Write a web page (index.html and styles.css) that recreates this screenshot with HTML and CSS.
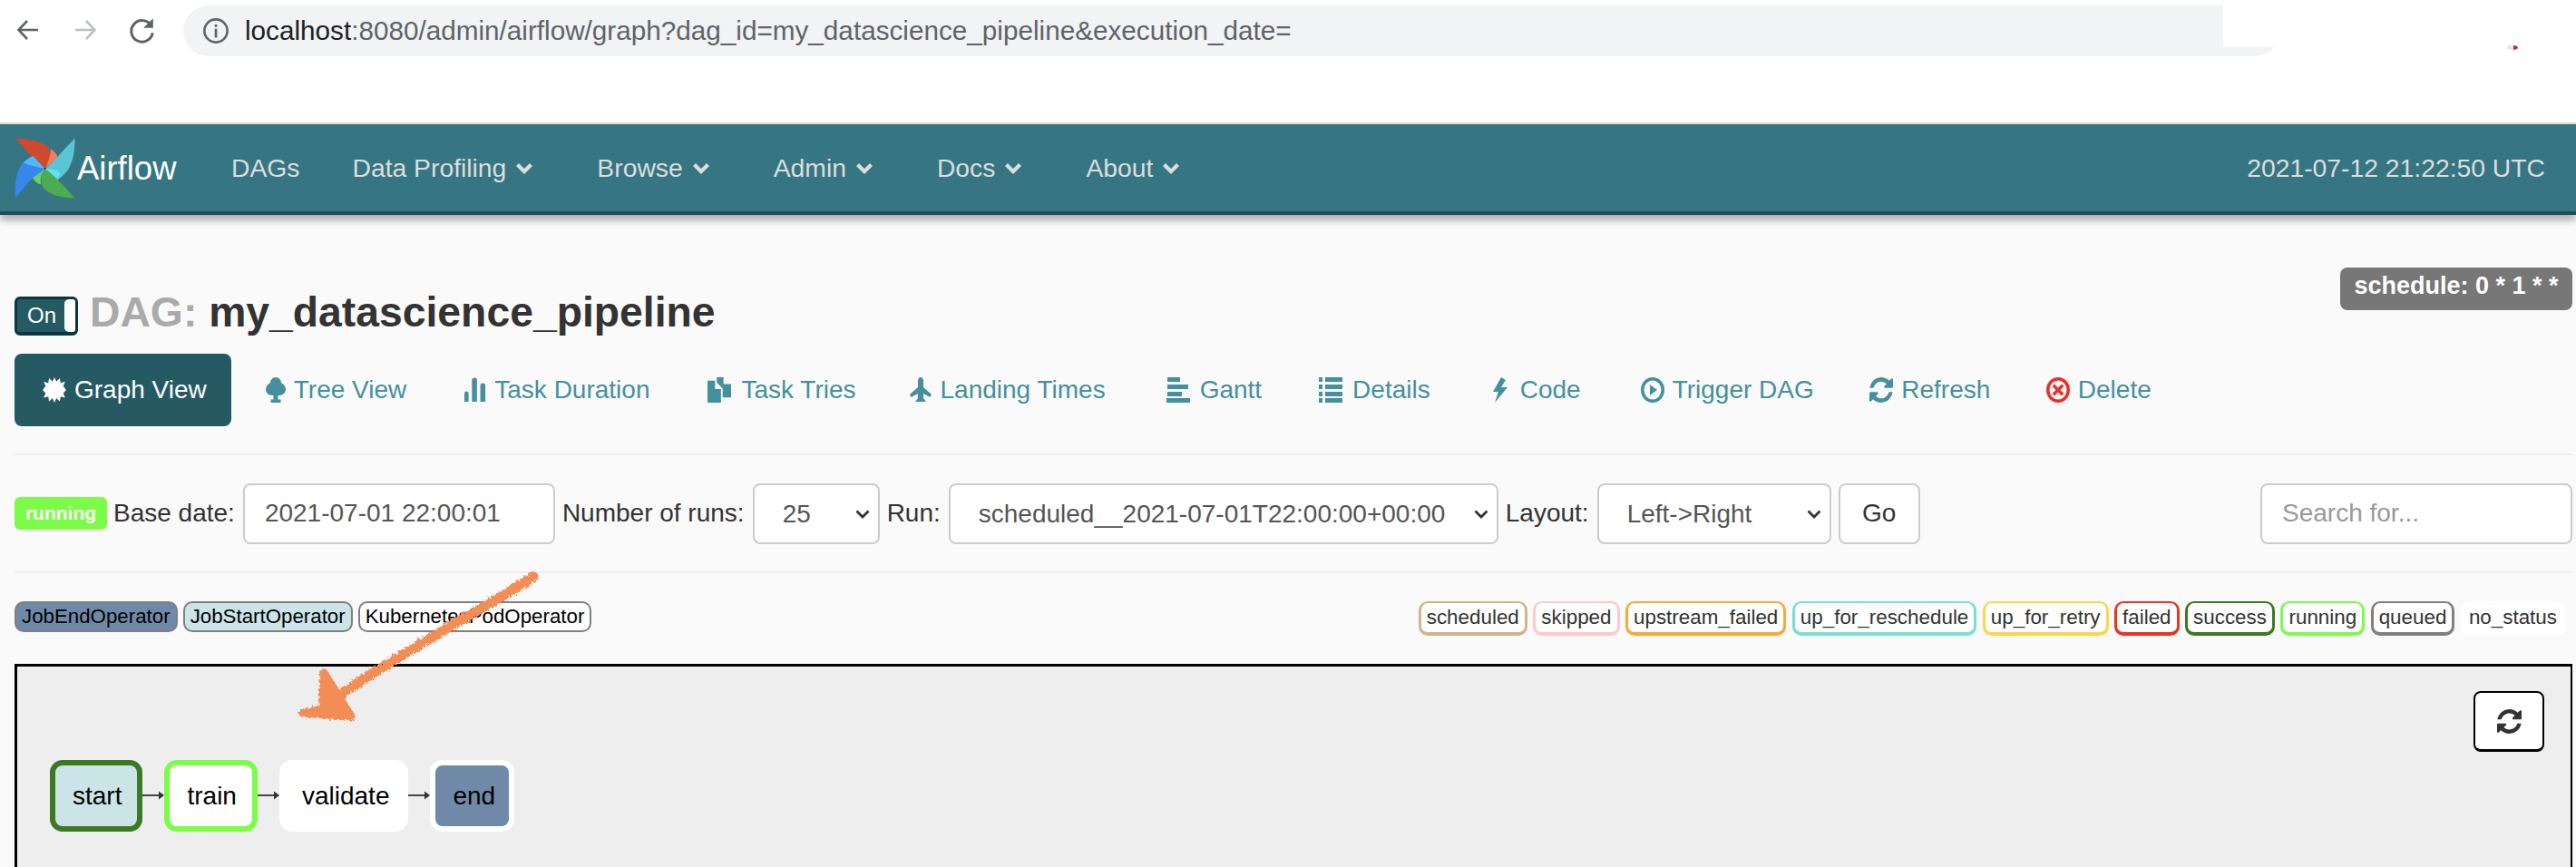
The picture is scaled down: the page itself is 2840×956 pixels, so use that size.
FILE: index.html
```html
<!DOCTYPE html>
<html lang="en">
<head>
<meta charset="utf-8">
<title>Airflow - my_datascience_pipeline</title>
<link rel="stylesheet" href="styles.css">
</head>
<body>
<header class="chrome">
  <svg class="chrome-icon back" viewBox="0 0 28 28"><path d="M25 14H4M13 4 3.500 14 13 24" fill="none" stroke="#5f6368" stroke-width="2.600"/></svg>
  <svg class="chrome-icon fwd" viewBox="0 0 28 28"><path d="M3 14h21M15 4l9.500 10L15 24" fill="none" stroke="#bdc1c6" stroke-width="2.600"/></svg>
  <svg class="chrome-icon reload" viewBox="0 0 28 28"><path d="M23 9.500A11 11 0 1 0 24.500 17" fill="none" stroke="#5f6368" stroke-width="2.800"/><path d="M25 2v10H15z" fill="#5f6368"/></svg>
  <div class="omnibox">
    <svg class="info" viewBox="0 0 28 28"><circle cx="14" cy="14" r="11.800" fill="none" stroke="#5f6368" stroke-width="2.400"/><path d="M12.800 12h2.500v9h-2.500zM12.800 7.500h2.500v2.500h-2.500z" fill="#5f6368"/></svg>
    <span class="url"><b>localhost</b>:8080/admin/airflow/graph?dag_id=my_datascience_pipeline&amp;execution_date=</span>
    <div class="omni-mask"></div>
  </div>
  <i class="speck"></i>
</header>

<nav class="navbar">
  <a class="brand">
    <svg class="logo" viewBox="40 60 225 220">
      <path d="M52 68C95 70 140 75 165 100 175 125 168 150 153 170 120 150 85 105 52 68Z" fill="#d1492c"/>
      <path d="M172 103C188 115 195 125 196 132L153 170C165 150 172 125 172 103Z" fill="#f07f5e"/>
      <path d="M255 68C255 110 250 145 230 178 215 195 205 205 190 213L153 172 195 132C215 110 235 88 255 68Z" fill="#5cc5d5"/>
      <path d="M153 171C170 172 190 176 206 186 202 196 196 206 190 213Z" fill="#5de3f2"/>
      <path d="M255 272C215 270 180 265 155 245 135 225 135 195 153 172 180 190 222 235 255 272Z" fill="#4dab52"/>
      <path d="M153 172C138 190 135 210 140 226 125 222 113 210 108 197 120 185 135 176 153 172Z" fill="#63d36c"/>
      <path d="M52 272C50 230 50 190 72 158 85 143 98 133 112 128L153 172 108 205C90 225 70 250 52 272Z" fill="#3587ea"/>
      <path d="M112 128 153 172C130 166 100 160 78 152 88 142 100 133 112 128Z" fill="#55b6f6"/>
      <circle cx="153" cy="171" r="3" fill="#12202a"/>
    </svg>
    <span>Airflow</span>
  </a>
  <a class="nav-link">DAGs</a>
  <a class="nav-link has-menu">Data Profiling<svg class="chev" viewBox="0 0 20 16"><path d="M1 5l3-3 6 6 6-6 3 3-9 9z"/></svg></a>
  <a class="nav-link has-menu">Browse<svg class="chev" viewBox="0 0 20 16"><path d="M1 5l3-3 6 6 6-6 3 3-9 9z"/></svg></a>
  <a class="nav-link has-menu">Admin<svg class="chev" viewBox="0 0 20 16"><path d="M1 5l3-3 6 6 6-6 3 3-9 9z"/></svg></a>
  <a class="nav-link has-menu">Docs<svg class="chev" viewBox="0 0 20 16"><path d="M1 5l3-3 6 6 6-6 3 3-9 9z"/></svg></a>
  <a class="nav-link has-menu">About<svg class="chev" viewBox="0 0 20 16"><path d="M1 5l3-3 6 6 6-6 3 3-9 9z"/></svg></a>
  <span class="clock">2021-07-12 21:22:50 UTC</span>
</nav>

<main class="page">
  <section class="title-row">
    <div class="title-left">
      <div class="toggle"><span>On</span><i></i></div>
      <h1><span class="dag-label">DAG:</span> my_datascience_pipeline</h1>
    </div>
    <span class="schedule">schedule: 0 * 1 * *</span>
  </section>

  <ul class="tabs">
    <li class="tab active">
      <svg class="ti" viewBox="0 0 24 26"><path d="M12 0l2 4.500L17.500 1l.8 5 4.700-1.500L21 9l3 4-3 3.500 2 4.500-4.700-1.200-.8 5-3.500-3.500-2 4.700-2-4.700-3.500 3.500-.8-5L1 21l2-4.500L0 13l3-4-2-4.500L5.700 6l.8-5L10 4.500z"/></svg>Graph View</li>
    <li class="tab"><svg class="ti ti-narrow" viewBox="0 0 24 28"><path d="M12 0c3.500 0 6 3 6 6 3 1.500 5 4.500 5 7.500 0 3.500-3 6.500-7 6.500h-1.500v4.500h3V28H6.500v-3.500h3V20H8c-4 0-7-3-7-6.500C1 10.500 3 7.500 6 6c0-3 2.500-6 6-6z"/></svg>Tree View</li>
    <li class="tab"><svg class="ti ti-bars" viewBox="0 0 26 28"><path d="M0 18a2.500 2.500 0 0 1 5 0v10H0zM9 2.500a3 3 0 0 1 6 0V28H9zM19 9a3 3 0 0 1 6 0v19h-6z"/></svg>Task Duration</li>
    <li class="tab"><svg class="ti ti-wide" viewBox="0 0 28 30"><path d="M0 4h9v10h7v16H0zM11 0h8v8h9v16h-10V13l-7-7z"/></svg>Task Tries</li>
    <li class="tab"><svg class="ti" viewBox="0 0 24 28"><path d="M12 0c2 0 3 2 3 4v7l9 8-1.500 3L15 18v5l3 4H6l3-4v-5l-7.500 4L0 19l9-8V4c0-2 1-4 3-4z"/></svg>Landing Times</li>
    <li class="tab"><svg class="ti ti-wide" viewBox="0 0 26 28"><path d="M1 0h14v5H1zM1 8h23v5H1zM1 16h16v5H1zM0 23h26v5H0z"/></svg>Gantt</li>
    <li class="tab"><svg class="ti ti-wide" viewBox="0 0 26 28"><path d="M0 0h4v5H0zM7 0h19v5H7zM0 8h4v5H0zM7 8h19v5H7zM0 16h4v5H0zM7 16h19v5H7zM0 23h4v5H0zM7 23h19v5H7z"/></svg>Details</li>
    <li class="tab"><svg class="ti ti-bolt" viewBox="0 0 18 28"><path d="M10 0 1 16h6L3 28l14-17h-7l5-8z"/></svg>Code</li>
    <li class="tab"><svg class="ti" viewBox="0 0 26 28"><path fill-rule="evenodd" d="M13 0a13 14 0 1 1 0 28 13 14 0 0 1 0-28zm0 3.500a9.500 10.500 0 1 0 0 21 9.500 10.500 0 0 0 0-21z"/><path d="M10 8l8 6-8 6z"/></svg>Trigger DAG</li>
    <li class="tab"><svg class="ti" viewBox="0 0 1536 1536" preserveAspectRatio="none"><path d="M1511 928q0 5-1 7-64 268-268 434.500t-478 166.500q-146 0-282.500-55t-243.500-157l-129 129q-19 19-45 19t-45-19-19-45v-448q0-26 19-45t45-19h448q26 0 45 19t19 45-19 45l-137 137q71 66 161 102t187 36q134 0 250-65t186-179q11-17 53-117 8-23 30-23h192q13 0 22.500 9.500t9.500 22.500zm25-800v448q0 26-19 45t-45 19h-448q-26 0-45-19t-19-45 19-45l138-138q-148-137-349-137-134 0-250 65t-186 179q-11 17-53 117-8 23-30 23h-199q-13 0-22.500-9.500t-9.500-22.500v-7q65-268 270-434.500t480-166.500q146 0 284 55.500t245 156.500l130-129q19-19 45-19t45 19 19 45z"/></svg>Refresh</li>
    <li class="tab"><svg class="ti" viewBox="0 0 26 28"><path fill="#e8302a" fill-rule="evenodd" d="M13 0a13 14 0 1 1 0 28 13 14 0 0 1 0-28zm0 3.500a9.500 10.500 0 1 0 0 21 9.500 10.500 0 0 0 0-21z"/><path fill="#e8302a" d="M9 7.500l4 4 4-4 2.500 2.500-4 4 4 4-2.500 2.500-4-4-4 4L6.500 18l4-4-4-4z"/></svg>Delete</li>
  </ul>

  <form class="controls">
    <span class="state-badge">running</span>
    <label>Base date:</label>
    <input class="ctl base-date" type="text" value="2021-07-01 22:00:01">
    <label>Number of runs:</label>
    <span class="select-wrap runs">
      <select class="ctl"><option>25</option></select>
      <svg class="select-caret" viewBox="0 0 16 10"><path d="M1.500 1.500 8 8l6.500-6.500" fill="none" stroke="#333" stroke-width="2.800"/></svg>
    </span>
    <label>Run:</label>
    <span class="select-wrap run">
      <select class="ctl"><option>scheduled__2021-07-01T22:00:00+00:00</option></select>
      <svg class="select-caret" viewBox="0 0 16 10"><path d="M1.500 1.500 8 8l6.500-6.500" fill="none" stroke="#333" stroke-width="2.800"/></svg>
    </span>
    <label>Layout:</label>
    <span class="select-wrap layout">
      <select class="ctl"><option>Left-&gt;Right</option></select>
      <svg class="select-caret" viewBox="0 0 16 10"><path d="M1.500 1.500 8 8l6.500-6.500" fill="none" stroke="#333" stroke-width="2.800"/></svg>
    </span>
    <button class="ctl go" type="button">Go</button>
    <input class="ctl search" type="text" placeholder="Search for...">
  </form>

  <section class="legends">
    <div class="legend-group">
      <span class="op op-end">JobEndOperator</span>
      <span class="op op-start">JobStartOperator</span>
      <span class="op op-pod">KubernetesPodOperator</span>
    </div>
    <div class="legend-group states">
      <span class="st st-scheduled">scheduled</span>
      <span class="st st-skipped">skipped</span>
      <span class="st st-upstream">upstream_failed</span>
      <span class="st st-resched">up_for_reschedule</span>
      <span class="st st-retry">up_for_retry</span>
      <span class="st st-failed">failed</span>
      <span class="st st-success">success</span>
      <span class="st st-running">running</span>
      <span class="st st-queued">queued</span>
      <span class="st st-none">no_status</span>
    </div>
  </section>

  <section class="canvas">
    <button class="reset" type="button"><svg viewBox="0 0 1536 1536"><path d="M1511 928q0 5-1 7-64 268-268 434.500t-478 166.500q-146 0-282.500-55t-243.500-157l-129 129q-19 19-45 19t-45-19-19-45v-448q0-26 19-45t45-19h448q26 0 45 19t19 45-19 45l-137 137q71 66 161 102t187 36q134 0 250-65t186-179q11-17 53-117 8-23 30-23h192q13 0 22.500 9.500t9.500 22.500zm25-800v448q0 26-19 45t-45 19h-448q-26 0-45-19t-19-45 19-45l138-138q-148-137-349-137-134 0-250 65t-186 179q-11 17-53 117-8 23-30 23h-199q-13 0-22.500-9.500t-9.500-22.500v-7q65-268 270-434.500t480-166.500q146 0 284 55.500t245 156.500l130-129q19-19 45-19t45 19 19 45z"/></svg></button>
    <div class="dag">
      <div class="node n-start">start</div>
      <svg class="edge" viewBox="0 0 24 12"><path d="M0 6h20" stroke="#444" stroke-width="2"/><path d="M18 1.500l6 4.500-6 4.500z" fill="#333"/></svg>
      <div class="node n-train">train</div>
      <svg class="edge" viewBox="0 0 24 12"><path d="M0 6h20" stroke="#444" stroke-width="2"/><path d="M18 1.500l6 4.500-6 4.500z" fill="#333"/></svg>
      <div class="node n-validate">validate</div>
      <svg class="edge" viewBox="0 0 24 12"><path d="M0 6h20" stroke="#444" stroke-width="2"/><path d="M18 1.500l6 4.500-6 4.500z" fill="#333"/></svg>
      <div class="node n-end">end</div>
    </div>
  </section>
</main>

<svg class="scribble" viewBox="320 620 280 185">
  <defs>
    <filter id="rough" x="-10%" y="-10%" width="120%" height="120%">
      <feTurbulence type="fractalNoise" baseFrequency="0.35" numOctaves="2" seed="4"/>
      <feDisplacementMap in="SourceGraphic" scale="6"/>
    </filter>
  </defs>
  <g filter="url(#rough)" fill="#f28d54" stroke="#f28d54">
    <path d="M588 636 C540 668 470 702 372 768" fill="none" stroke-width="11" stroke-linecap="round"/>
    <path d="M356 782 L357 742 L387 790 L334 786Z" stroke-width="9" stroke-linejoin="round"/>
  </g>
</svg>
</body>
</html>
```
FILE: styles.css
```css
* { box-sizing: border-box; }
html, body { margin: 0; height: 956px; overflow: hidden; }
body {
  position: relative;
  background: #fafafa;
  color: #333;
  font-family: "Liberation Sans", Arial, sans-serif;
  font-size: 28px;
}

/* browser toolbar */
.chrome {
  position: relative;
  height: 135px;
  background: #fff;
  display: flex;
  align-items: flex-start;
  padding: 6px 0 0 17px;
}
.chrome-icon { width: 28px; height: 28px; margin-top: 13px; flex: none; }
.fwd { margin-left: 35px; }
.reload { width: 30px; height: 30px; margin-left: 34px; margin-top: 12px; }
.omnibox {
  position: relative;
  margin-left: 30px;
  width: 2312px;
  height: 56px;
  border-radius: 28px;
  background: #f1f3f4;
  display: flex;
  align-items: center;
  padding-left: 21px;
}
.info { width: 30px; height: 30px; flex: none; }
.url { margin-left: 17px; color: #5f6368; font-size: 29.700px; white-space: nowrap; }
.url b { font-weight: 400; color: #202124; }
.omni-mask {
  position: absolute;
  left: 2249px;
  top: 0;
  right: -4px;
  height: 46px;
  background: #fff;
}
.speck {
  position: absolute;
  left: 2764px;
  top: 50px;
  width: 12px;
  height: 5px;
  border-radius: 50%;
  background: linear-gradient(90deg, #e4e6ea 60%, #b03040 60%);
}

/* navbar */
.navbar {
  height: 102px;
  background: #357682;
  border-top: 2px solid #dcdcdc;
  border-bottom: 4px solid #1e4d57;
  box-shadow: 0 6px 8px rgba(0, 0, 0, .3);
  display: flex;
  align-items: center;
  padding: 1px 34px 0 17px;
  color: #ddd;
  font-size: 28.300px;
  position: relative;
}
.brand { display: flex; align-items: center; color: #fff; font-size: 36.500px; width: 238px; }
.logo { width: 73px; height: 71px; margin-left: -4px; margin-right: -1px; flex: none; }
.nav-link { margin-right: 58px; white-space: nowrap; display: flex; align-items: center; }
.has-menu { margin-right: 70px; }
.chev { width: 20px; height: 16px; margin-left: 10px; fill: #ddd; }
.clock { margin-left: auto; white-space: nowrap; }

/* title */
.page { padding: 0 4px 0 16px; }
.title-row {
  height: 153px;
  padding-top: 58px;
  display: flex;
  justify-content: space-between;
  align-items: flex-start;
}
.title-left { display: flex; align-items: center; margin-top: 24px; }
.toggle {
  width: 70px;
  height: 43px;
  background: #265a63;
  border: 3px solid #0c3640;
  border-bottom-width: 4px;
  border-radius: 6px;
  display: flex;
  color: #fff;
  font-size: 24px;
  align-items: center;
  justify-content: space-between;
  padding-left: 11px;
}
.toggle i { width: 12px; height: 100%; background: #fff; border-radius: 5px 3px 3px 5px; }
h1 { margin: 0 0 8px 13px; font-size: 46.300px; font-weight: 700; line-height: 50px; color: #333; white-space: nowrap; }
.dag-label { color: #aaa; }
.schedule {
  width: 256px;
  height: 47px;
  background: #777;
  color: #fff;
  border-radius: 8px;
  font-size: 27px;
  font-weight: 700;
  display: flex;
  align-items: center;
  justify-content: center;
  white-space: nowrap;
  padding-bottom: 6px;
}

/* tabs */
.tabs {
  list-style: none;
  margin: 0;
  padding: 0 0 30px;
  height: 112px;
  display: flex;
  gap: 4px;
  border-bottom: 2px solid #eee;
}
.tab {
  height: 80px;
  display: flex;
  align-items: center;
  padding: 0 30px;
  color: #44909f;
  border-radius: 8px;
  white-space: nowrap;
}
.tab.active { background: #265a63; color: #fff; padding: 0 27px 0 31px; margin-right: 3px; }
.tab:nth-child(4) { margin-right: -6px; }
.tab:nth-child(5) { margin-right: 3px; }
.tab:nth-child(6) { margin-right: -1px; }
.tab:nth-child(7) { margin-right: 4px; }
.tab:nth-child(8) { margin-right: 2px; }
.tab:nth-child(9) { margin-right: -2.500px; }
.tab:nth-child(10) { margin-right: -2.500px; }
.ti { width: 26px; height: 28px; margin-right: 9px; fill: currentColor; flex: none; }
.ti-narrow { width: 24px; margin-right: 8px; }
.ti-bars { width: 24px; }
.ti-wide { margin-right: 11px; }
.ti-bolt { width: 18px; margin-right: 13px; }

/* controls */
.controls {
  height: 130px;
  display: flex;
  align-items: center;
  gap: 8px;
  border-bottom: 2px solid #eee;
}
.state-badge {
  width: 102px;
  height: 36px;
  margin-right: -1px;
  background: #7bfc47;
  color: #fff;
  font-size: 21px;
  font-weight: 700;
  border-radius: 6px;
  display: flex;
  align-items: center;
  justify-content: center;
}
.controls label { margin-right: 1px; }
.ctl {
  height: 67px;
  background: #fff;
  border: 2px solid #ccc;
  border-radius: 8px;
  color: #555;
  font: 28px "Liberation Sans", Arial, sans-serif;
  padding: 0 22px;
}
.base-date { width: 344px; }
.select-wrap { position: relative; display: block; }
.select-wrap select {
  width: 100%;
  appearance: none;
  -webkit-appearance: none;
  padding: 0 30px 0 31px;
}
.select-caret {
  position: absolute;
  right: 11px;
  top: 29px;
  width: 16px;
  height: 10px;
  pointer-events: none;
}
.runs { width: 140px; }
.run { width: 606px; }
.layout { width: 258px; }
.go { width: 90px; color: #333; padding: 0; }
.search { width: 344px; margin-left: auto; }
.search::placeholder { color: #999; }

/* legends */
.legends {
  height: 100px;
  display: flex;
  justify-content: space-between;
  align-items: flex-start;
  padding-top: 31px;
  padding-right: 8px;
}
.legend-group { display: flex; gap: 6px; }
.states { gap: 6.500px; }
.op, .st { white-space: nowrap; display: flex; align-items: center; border-radius: 10px; }
.op { font-size: 22.300px; height: 34px; padding: 0 6px; border: 2px solid #808080; color: #000; }
.op-end { background: #7189a8; }
.op-start { background: #cbe4e8; }
.op-pod { background: #fff; }
.st { font-size: 22.400px; height: 38px; padding: 0 6px; background: #fff; border-style: solid; border-width: 2px 3px 4px; color: #333; }
.st-scheduled { border-color: #d2b48c; }
.st-skipped { border-color: #ffc8d0; }
.st-upstream { border-color: #f7a93c; }
.st-resched { border-color: #76e0d0; }
.st-retry { border-color: #fcd64a; }
.st-failed { border-color: #ee3224; }
.st-success { border-color: #3b7a22; }
.st-running { border-color: #7bfc47; }
.st-queued { border-color: #808080; }
.st-none { border-color: #fff; }

/* graph */
.canvas {
  position: relative;
  height: 300px;
  background: #eee;
  border: 3px solid #000;
  border-right-width: 2px;
  padding: 103px 0 0 36px;
}
.reset {
  position: absolute;
  top: 27px;
  right: 29px;
  width: 78px;
  height: 67px;
  background: #fff;
  border: 2px solid #000;
  border-bottom-width: 3px;
  border-radius: 8px;
  padding: 0;
  display: flex;
  align-items: center;
  justify-content: center;
}
.reset svg { width: 27px; height: 27px; fill: #333; }
.dag { display: flex; align-items: center; }
.node {
  height: 79px;
  border: 6px solid #fff;
  border-radius: 14px;
  padding: 0 17px 0 19px;
  background: #fff;
  color: #000;
  display: flex;
  align-items: center;
}
.n-start { background: #cbe4e8; border-color: #3b7a22; }
.n-train { border-color: #7bfc47; }
.n-validate, .n-end { padding-right: 15px; }
.n-end { background: #7189a8; }
.edge { width: 24px; height: 12px; flex: none; margin-top: -2px; }

/* hand-drawn annotation on top of the page */
.scribble {
  position: absolute;
  left: 320px;
  top: 620px;
  width: 280px;
  height: 185px;
  pointer-events: none;
}
```
